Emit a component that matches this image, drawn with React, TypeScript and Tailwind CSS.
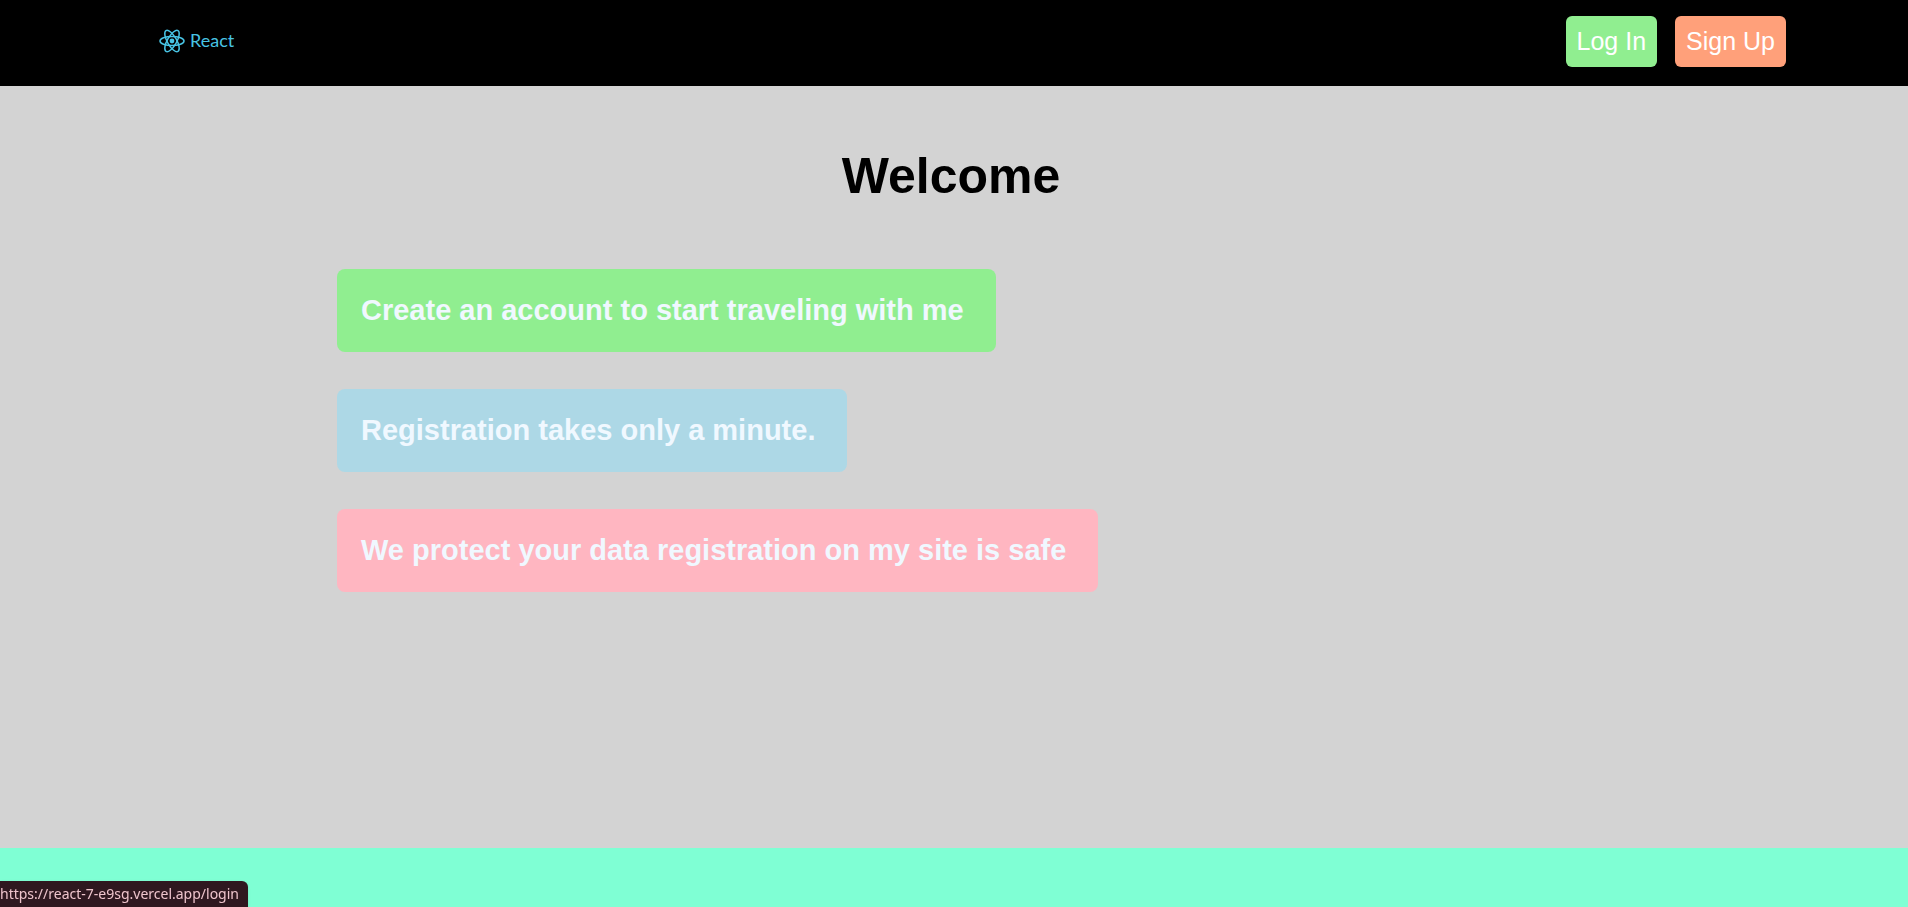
const notes = [
  { text: 'Create an account to start traveling with me', color: 'bg-[#90ee90]' },
  { text: 'Registration takes only a minute.', color: 'bg-[#add8e6]' },
  { text: 'We protect your data registration on my site is safe', color: 'bg-[#ffb6c1]' },
];

function Logo() {
  return (
    <a href="/" className="flex items-center gap-[5px] text-[#48c4e4]">
      <svg viewBox="-13 -13 26 26" className="size-[26px]" fill="none" stroke="currentColor" strokeWidth="1.5" aria-hidden="true">
        <circle r="2.4" fill="currentColor" stroke="none" />
        <ellipse rx="12" ry="4.6" />
        <ellipse rx="12" ry="4.6" transform="rotate(60)" />
        <ellipse rx="12" ry="4.6" transform="rotate(120)" />
      </svg>
      <span className="pb-0.5 font-['Lato',sans-serif] text-lg leading-6">React</span>
    </a>
  );
}

export default function App() {
  return (
    <div className="flex min-h-screen flex-col bg-[#d3d3d3] font-['Liberation_Sans',Arial,sans-serif]">
      <header className="flex h-[86px] items-start justify-between bg-black pr-[122px] pl-[159px]">
        <div className="pt-7">
          <Logo />
        </div>
        <nav className="flex gap-[18px] pt-4 text-[25px] leading-[29px] text-white">
          <a href="/login" className="rounded-md bg-[#90ee90] p-[11px]">Log In</a>
          <a href="/signup" className="rounded-md bg-[#ffa07a] p-[11px]">Sign Up</a>
        </nav>
      </header>

      <main className="flex-1 pt-[61px] pr-[6px]">
        <h1 className="text-center text-[50px] leading-[58px] font-bold text-black">Welcome</h1>
        <div className="mt-16 flex flex-col items-start gap-[37px] pl-[337px] text-[#f0f8ff]">
          {notes.map((note) => (
            <h2 key={note.text} className={`rounded-lg py-6 pr-8 pl-6 text-[29px] leading-[35px] font-bold ${note.color}`}>
              {note.text}
            </h2>
          ))}
        </div>
      </main>

      <footer className="h-[59px] bg-[#7fffd4]" />

      <div className="fixed bottom-0 left-0 flex h-[26px] items-center rounded-tr-md bg-[#2f1820] pr-[9px] text-[#eec4cc] shadow-sm">
        <span className="font-['Noto_Sans',sans-serif] text-sm leading-5">https://react-7-e9sg.vercel.app/login</span>
      </div>
    </div>
  );
}
